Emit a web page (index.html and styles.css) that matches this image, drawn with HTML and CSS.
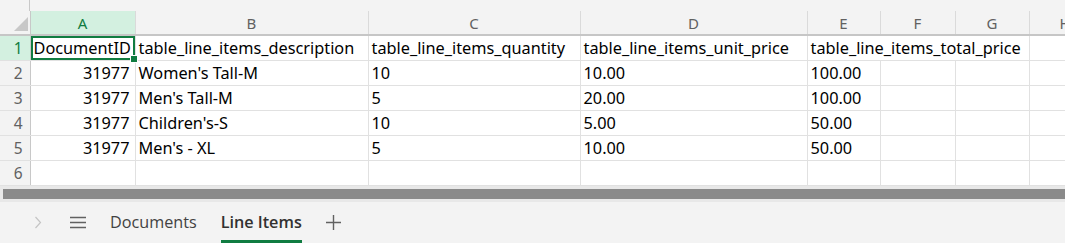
FILE: index.html
```html
<!DOCTYPE html>
<html>
<head>
<meta charset="utf-8">
<title>Line Items</title>
<link rel="stylesheet" href="styles.css">
</head>
<body>
<div class="sheet">
<div class="topstrip"><div class="corner-gap"></div></div>
<table class="grid">
<colgroup>
<col class="c-rh"><col class="c-a"><col class="c-b"><col class="c-c"><col class="c-d"><col class="c-e"><col class="c-f"><col class="c-g"><col class="c-h">
</colgroup>
<thead>
<tr class="colhdr">
<th class="corner"><svg width="14" height="14" viewBox="0 0 14 14"><polygon points="14,0 14,14 0,14" fill="#c8c8c8"/></svg></th>
<th class="sel">A</th><th>B</th><th>C</th><th>D</th><th>E</th><th>F</th><th>G</th><th class="clip">H</th>
</tr>
</thead>
<tbody>
<tr><th class="rh sel">1</th><td class="active">DocumentID<span class="handle"></span></td><td>table_line_items_description</td><td>table_line_items_quantity</td><td>table_line_items_unit_price</td><td class="spill">table_line_items_total_price</td><td class="spill"></td><td></td><td></td></tr>
<tr><th class="rh">2</th><td class="num">31977</td><td>Women's Tall-M</td><td>10</td><td>10.00</td><td>100.00</td><td></td><td></td><td></td></tr>
<tr><th class="rh">3</th><td class="num">31977</td><td>Men's Tall-M</td><td>5</td><td>20.00</td><td>100.00</td><td></td><td></td><td></td></tr>
<tr><th class="rh">4</th><td class="num">31977</td><td>Children's-S</td><td>10</td><td>5.00</td><td>50.00</td><td></td><td></td><td></td></tr>
<tr><th class="rh">5</th><td class="num">31977</td><td>Men's - XL</td><td>5</td><td>10.00</td><td>50.00</td><td></td><td></td><td></td></tr>
<tr><th class="rh">6</th><td></td><td></td><td></td><td></td><td></td><td></td><td></td><td></td></tr>
</tbody>
</table>
<div class="hscroll"><div class="thumb"></div></div>
<div class="tabbar">
<span class="chev"><svg width="8" height="13" viewBox="0 0 8 13"><polyline points="1.5,1 6.5,6.5 1.5,12" fill="none" stroke="#c4c4c4" stroke-width="1.2"/></svg></span>
<span class="menu"><svg width="16" height="13" viewBox="0 0 16 13"><path d="M0 1.5H16M0 6.5H16M0 11.5H16" stroke="#616161" stroke-width="1.3"/></svg></span>
<span class="tab">Documents</span>
<span class="tab current">Line Items</span>
<span class="add"><svg width="15" height="15" viewBox="0 0 15 15"><path d="M7.5 0V15M0 7.5H15" stroke="#616161" stroke-width="1.4"/></svg></span>
</div>
</div>
</body>
</html>
```
FILE: styles.css
```css
body {
   margin: 0;
   background-color: white;
   font-family: "Noto Sans", "Open Sans", sans-serif;
   overflow: hidden;
}

.sheet {
   width: 1065px;
   height: 243px;
   overflow: hidden;
   position: relative;
}

.topstrip {
   height: 11px;
   background-color: #f3f3f3;
}

.corner-gap {
   width: 29px;
   height: 11px;
   border-right: 1px solid #c8c8c8;
}

.grid {
   border-collapse: collapse;
   table-layout: fixed;
   width: 1109px;
}

.c-rh { width: 30px; }
.c-a { width: 105px; }
.c-b { width: 233px; }
.c-c { width: 212px; }
.c-d { width: 227px; }
.c-e { width: 73px; }
.c-f { width: 75px; }
.c-g { width: 74px; }
.c-h { width: 80px; }

.colhdr th {
   height: 20px;
   padding: 0;
   background-color: #f3f3f3;
   color: #616161;
   font-weight: normal;
   font-size: 15px;
   border-left: 1px solid #dadada;
   border-bottom: 2px solid #c6c6c6;
   text-align: center;
   line-height: 20px;
}

.colhdr th.corner {
   border-left: none;
   border-right: 1px solid #c8c8c8;
   text-align: right;
   vertical-align: bottom;
   padding: 0 2px 3px 0;
   line-height: 0;
}

.colhdr th.sel {
   background-color: #d3f0e0;
   color: #107c41;
}

.colhdr th.clip {
   text-align: left;
   padding-left: 30px;
}

.rh {
   height: 24px;
   padding: 0 7px 0 0;
   background-color: #f3f3f3;
   color: #616161;
   font-weight: normal;
   font-size: 15.5px;
   line-height: 20px;
   text-align: right;
   border-right: 1px solid #c8c8c8;
   border-bottom: 1px solid #e1e1e1;
}

.rh.sel {
   background-color: #d3f0e0;
   color: #107c41;
}

td {
   height: 24px;
   padding: 0 0 0 3px;
   font-size: 16.3px;
   line-height: 20px;
   color: #000;
   white-space: nowrap;
   overflow: visible;
   border-right: 1px solid #e1e1e1;
   border-bottom: 1px solid #e1e1e1;
}

/* text runs over the next cells, so no gridline under it */
td.spill {
   border-right: hidden;
}

td.num {
   text-align: right;
   padding-right: 5px;
}

td.active {
   position: relative;
   box-shadow: inset 0 0 0 2px #107c41;
}

.handle {
   position: absolute;
   right: -3px;
   bottom: -3px;
   width: 6px;
   height: 6px;
   background-color: #107c41;
   border: 1px solid white;
}

.hscroll {
   height: 16px;
   background-color: #e8e8e8;
   padding: 3px 0 3px 3px;
   box-sizing: border-box;
}

.thumb {
   height: 10px;
   background-color: #8a8a8a;
}

.tabbar {
   height: 41px;
   background-color: #f3f3f3;
   border-bottom: 1px solid #e0e0e0;
   display: flex;
   align-items: center;
   font-family: "Open Sans", "Noto Sans", sans-serif;
   font-size: 16.2px;
   color: #424242;
}

.chev {
   margin-left: 34px;
   display: flex;
}

.menu {
   margin-left: 28px;
   display: flex;
}

.tab {
   height: 41px;
   line-height: 40px;
   box-sizing: border-box;
   margin-left: 24px;
}

.tab:first-of-type {
   margin-left: 25px;
}

.tab.current {
   font-weight: 600;
   color: #323130;
   border-bottom: 3px solid #107c41;
   margin-left: 24px;
}

.add {
   margin-left: 24px;
   display: flex;
}
```
